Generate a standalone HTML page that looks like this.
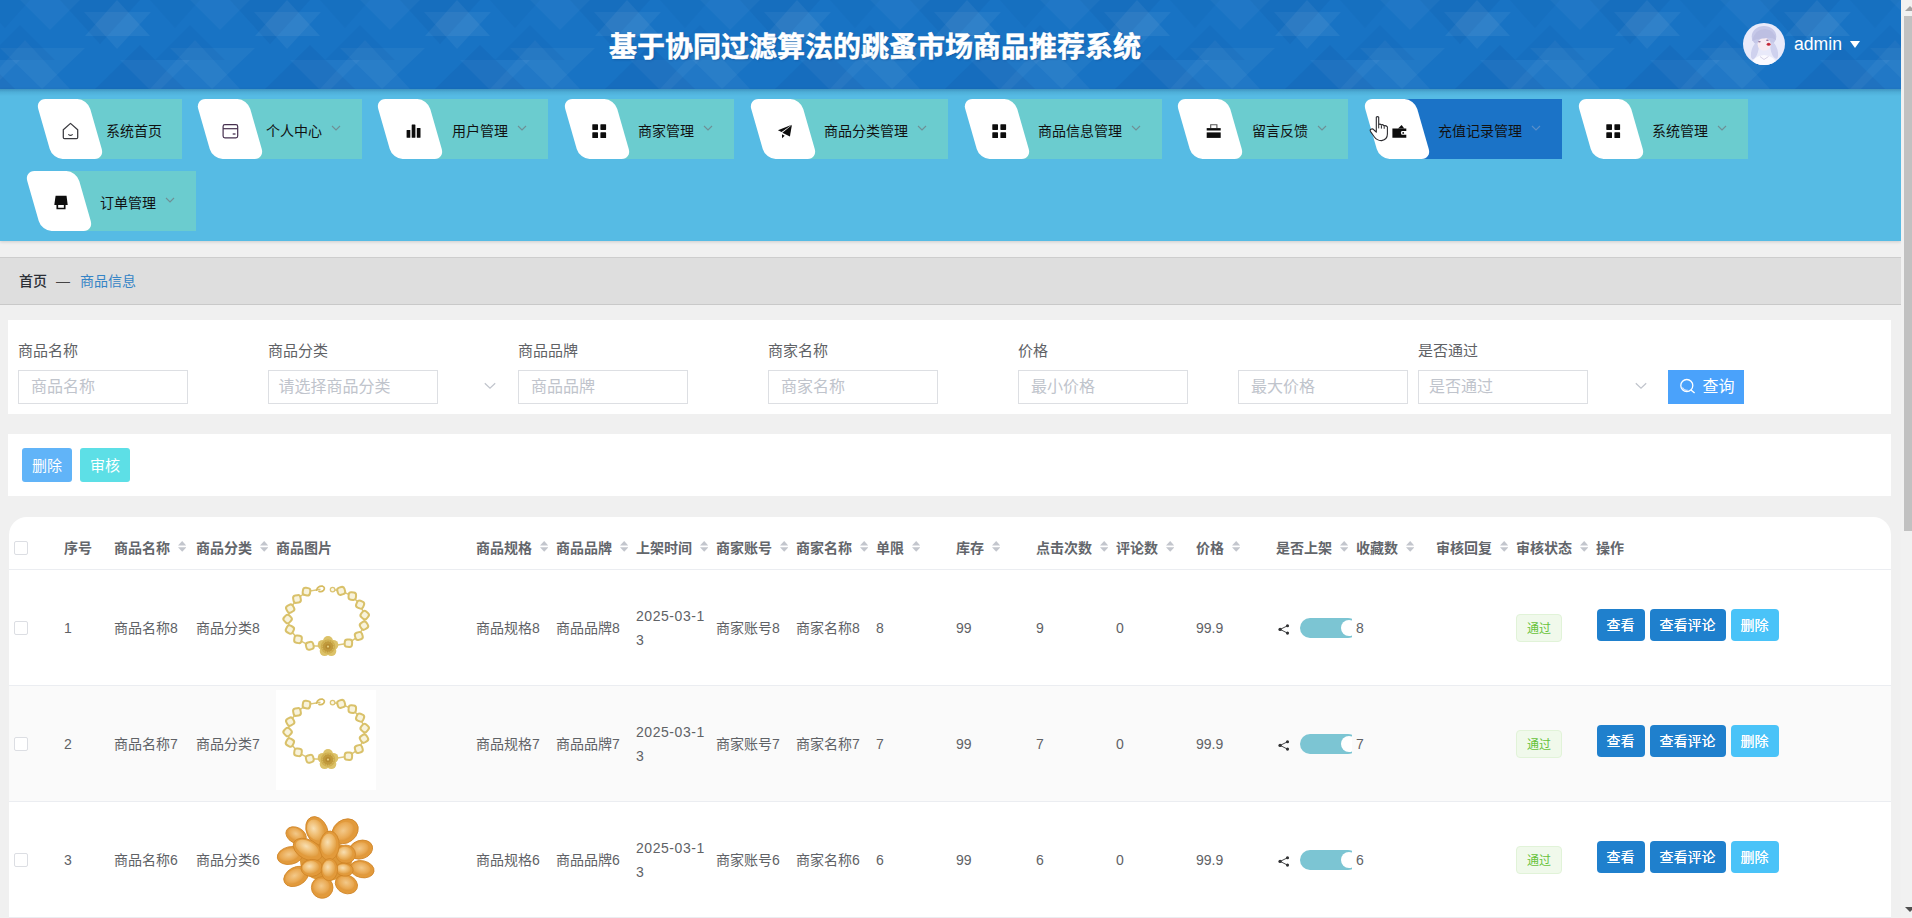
<!DOCTYPE html>
<html lang="zh-CN"><head><meta charset="utf-8"><title>商品信息</title><style>
*{box-sizing:border-box;margin:0;padding:0}
html,body{width:1912px;height:918px;overflow:hidden;background:#f0f0f0;font-family:"Liberation Sans","Noto Sans CJK SC",sans-serif;font-size:14px;color:#606266}
#app{position:relative;width:1912px;height:918px;overflow:hidden;background:#f0f0f0}
.abs{position:absolute}
#hdr{position:absolute;left:0;top:0;width:1901px;height:89px;background:#1873c4;overflow:hidden}
#hsh{position:absolute;left:0;top:89px;width:1901px;height:7px;background:linear-gradient(rgba(10,60,110,.30),rgba(10,60,110,.10) 45%,rgba(10,60,110,0));z-index:3}
#title{position:absolute;left:0;width:1750px;top:28px;height:40px;line-height:40px;text-align:center;color:#fff;font-size:28px;font-weight:bold;-webkit-text-stroke:.5px #fff;text-shadow:1px 1px 2px rgba(10,50,110,.35);white-space:nowrap}
#menu{position:absolute;left:0;top:89px;width:1901px;height:152px;background:#56bbe4;box-shadow:0 1px 3px rgba(0,0,0,.15)}
.mi{position:absolute;height:60px}
.mi .bg{position:absolute;left:30px;top:0;right:0;height:60px;background:#6bcccf}
.mi.act .bg{background:#1b73c7}
.mi .wb{position:absolute;left:6.5px;top:0;width:52px;height:60px;background:#fff;border-radius:10px;transform:skewX(16deg)}
.mi .tx{position:absolute;top:22px;height:20px;line-height:20px;font-size:14px;color:#111;white-space:nowrap}
.mi svg.ic{position:absolute;overflow:visible}
.mi svg.ar{position:absolute;top:26px;width:10px;height:6px}
#bc{position:absolute;left:0;top:257px;width:1901px;height:48px;background:#dedede;border-top:1px solid #cdcdcd;border-bottom:1px solid #c9c9c9}
#bc span{position:absolute;top:13px;line-height:20px;font-size:14px;white-space:nowrap}
.panel{position:absolute;left:8px;width:1883px;background:#fff}
.lbl{position:absolute;top:341px;line-height:20px;font-size:15px;color:#606266;white-space:nowrap}
.inp{position:absolute;top:370px;width:170px;height:34px;border:1px solid #dddfe3;background:#fff;font-size:16px;color:#c0c4cc;line-height:32px;padding-left:12px;white-space:nowrap}
.btn{position:absolute;color:#fff;text-align:center;white-space:nowrap}
table{border-collapse:collapse}
.th{position:absolute;top:538px;line-height:20px;font-size:14px;font-weight:bold;color:#63666b;white-space:nowrap}
.td{position:absolute;line-height:24px;font-size:14px;color:#606266;white-space:nowrap}
.row{position:absolute;left:9px;width:1882px;height:116px;border-bottom:1px solid #ebedf1}
.cb{position:absolute;left:14px;width:14px;height:14px;border:1px solid #dcdee3;border-radius:2px;background:#fff}
.tag{position:absolute;left:1516px;width:46px;height:28px;border:1px solid #e1f3d8;background:#f0f9eb;border-radius:4px;color:#67c23a;font-size:12px;line-height:29px;text-align:center}
.ob{position:absolute;height:32px;line-height:32px;border-radius:4px;color:#fff;font-size:14px;text-align:center;white-space:nowrap;text-shadow:0 0 .6px #fff}
</style></head><body><div id="app">
<div id="hdr"><svg class="abs" style="left:0;top:0" width="1901" height="89" viewBox="0 0 1901 89"><polygon points="-53,0 -85,36 -20,36" fill="rgba(255,255,255,.06)"/><polygon points="-86,12 -19,12 -53,49" fill="rgba(255,255,255,.05)"/><polygon points="-170,48 -85,48 -128,89" fill="rgba(255,255,255,.045)"/><polygon points="-190,89 -145,40 -100,89" fill="rgba(255,255,255,.04)"/><polygon points="-110,0 -30,0 -70,44" fill="rgba(0,40,110,.06)"/><polygon points="-75,89 -30,45 15,89" fill="rgba(0,40,110,.07)"/><polygon points="-150,0 -90,0 -120,30" fill="rgba(255,255,255,.035)"/><polygon points="-50,60 20,60 -15,95" fill="rgba(255,255,255,.04)"/><polygon points="-185,60 -150,25 -115,60" fill="rgba(0,40,110,.05)"/><polygon points="-20,0 30,0 5,28" fill="rgba(0,40,110,.045)"/><polygon points="117,0 85,36 150,36" fill="rgba(255,255,255,.06)"/><polygon points="84,12 151,12 117,49" fill="rgba(255,255,255,.05)"/><polygon points="0,48 85,48 42,89" fill="rgba(255,255,255,.045)"/><polygon points="-20,89 25,40 70,89" fill="rgba(255,255,255,.04)"/><polygon points="60,0 140,0 100,44" fill="rgba(0,40,110,.06)"/><polygon points="95,89 140,45 185,89" fill="rgba(0,40,110,.07)"/><polygon points="20,0 80,0 50,30" fill="rgba(255,255,255,.035)"/><polygon points="120,60 190,60 155,95" fill="rgba(255,255,255,.04)"/><polygon points="-15,60 20,25 55,60" fill="rgba(0,40,110,.05)"/><polygon points="150,0 200,0 175,28" fill="rgba(0,40,110,.045)"/><polygon points="287,0 255,36 320,36" fill="rgba(255,255,255,.06)"/><polygon points="254,12 321,12 287,49" fill="rgba(255,255,255,.05)"/><polygon points="170,48 255,48 212,89" fill="rgba(255,255,255,.045)"/><polygon points="150,89 195,40 240,89" fill="rgba(255,255,255,.04)"/><polygon points="230,0 310,0 270,44" fill="rgba(0,40,110,.06)"/><polygon points="265,89 310,45 355,89" fill="rgba(0,40,110,.07)"/><polygon points="190,0 250,0 220,30" fill="rgba(255,255,255,.035)"/><polygon points="290,60 360,60 325,95" fill="rgba(255,255,255,.04)"/><polygon points="155,60 190,25 225,60" fill="rgba(0,40,110,.05)"/><polygon points="320,0 370,0 345,28" fill="rgba(0,40,110,.045)"/><polygon points="457,0 425,36 490,36" fill="rgba(255,255,255,.06)"/><polygon points="424,12 491,12 457,49" fill="rgba(255,255,255,.05)"/><polygon points="340,48 425,48 382,89" fill="rgba(255,255,255,.045)"/><polygon points="320,89 365,40 410,89" fill="rgba(255,255,255,.04)"/><polygon points="400,0 480,0 440,44" fill="rgba(0,40,110,.06)"/><polygon points="435,89 480,45 525,89" fill="rgba(0,40,110,.07)"/><polygon points="360,0 420,0 390,30" fill="rgba(255,255,255,.035)"/><polygon points="460,60 530,60 495,95" fill="rgba(255,255,255,.04)"/><polygon points="325,60 360,25 395,60" fill="rgba(0,40,110,.05)"/><polygon points="490,0 540,0 515,28" fill="rgba(0,40,110,.045)"/><polygon points="627,0 595,36 660,36" fill="rgba(255,255,255,.06)"/><polygon points="594,12 661,12 627,49" fill="rgba(255,255,255,.05)"/><polygon points="510,48 595,48 552,89" fill="rgba(255,255,255,.045)"/><polygon points="490,89 535,40 580,89" fill="rgba(255,255,255,.04)"/><polygon points="570,0 650,0 610,44" fill="rgba(0,40,110,.06)"/><polygon points="605,89 650,45 695,89" fill="rgba(0,40,110,.07)"/><polygon points="530,0 590,0 560,30" fill="rgba(255,255,255,.035)"/><polygon points="630,60 700,60 665,95" fill="rgba(255,255,255,.04)"/><polygon points="495,60 530,25 565,60" fill="rgba(0,40,110,.05)"/><polygon points="660,0 710,0 685,28" fill="rgba(0,40,110,.045)"/><polygon points="797,0 765,36 830,36" fill="rgba(255,255,255,.06)"/><polygon points="764,12 831,12 797,49" fill="rgba(255,255,255,.05)"/><polygon points="680,48 765,48 722,89" fill="rgba(255,255,255,.045)"/><polygon points="660,89 705,40 750,89" fill="rgba(255,255,255,.04)"/><polygon points="740,0 820,0 780,44" fill="rgba(0,40,110,.06)"/><polygon points="775,89 820,45 865,89" fill="rgba(0,40,110,.07)"/><polygon points="700,0 760,0 730,30" fill="rgba(255,255,255,.035)"/><polygon points="800,60 870,60 835,95" fill="rgba(255,255,255,.04)"/><polygon points="665,60 700,25 735,60" fill="rgba(0,40,110,.05)"/><polygon points="830,0 880,0 855,28" fill="rgba(0,40,110,.045)"/><polygon points="967,0 935,36 1000,36" fill="rgba(255,255,255,.06)"/><polygon points="934,12 1001,12 967,49" fill="rgba(255,255,255,.05)"/><polygon points="850,48 935,48 892,89" fill="rgba(255,255,255,.045)"/><polygon points="830,89 875,40 920,89" fill="rgba(255,255,255,.04)"/><polygon points="910,0 990,0 950,44" fill="rgba(0,40,110,.06)"/><polygon points="945,89 990,45 1035,89" fill="rgba(0,40,110,.07)"/><polygon points="870,0 930,0 900,30" fill="rgba(255,255,255,.035)"/><polygon points="970,60 1040,60 1005,95" fill="rgba(255,255,255,.04)"/><polygon points="835,60 870,25 905,60" fill="rgba(0,40,110,.05)"/><polygon points="1000,0 1050,0 1025,28" fill="rgba(0,40,110,.045)"/><polygon points="1137,0 1105,36 1170,36" fill="rgba(255,255,255,.06)"/><polygon points="1104,12 1171,12 1137,49" fill="rgba(255,255,255,.05)"/><polygon points="1020,48 1105,48 1062,89" fill="rgba(255,255,255,.045)"/><polygon points="1000,89 1045,40 1090,89" fill="rgba(255,255,255,.04)"/><polygon points="1080,0 1160,0 1120,44" fill="rgba(0,40,110,.06)"/><polygon points="1115,89 1160,45 1205,89" fill="rgba(0,40,110,.07)"/><polygon points="1040,0 1100,0 1070,30" fill="rgba(255,255,255,.035)"/><polygon points="1140,60 1210,60 1175,95" fill="rgba(255,255,255,.04)"/><polygon points="1005,60 1040,25 1075,60" fill="rgba(0,40,110,.05)"/><polygon points="1170,0 1220,0 1195,28" fill="rgba(0,40,110,.045)"/><polygon points="1307,0 1275,36 1340,36" fill="rgba(255,255,255,.06)"/><polygon points="1274,12 1341,12 1307,49" fill="rgba(255,255,255,.05)"/><polygon points="1190,48 1275,48 1232,89" fill="rgba(255,255,255,.045)"/><polygon points="1170,89 1215,40 1260,89" fill="rgba(255,255,255,.04)"/><polygon points="1250,0 1330,0 1290,44" fill="rgba(0,40,110,.06)"/><polygon points="1285,89 1330,45 1375,89" fill="rgba(0,40,110,.07)"/><polygon points="1210,0 1270,0 1240,30" fill="rgba(255,255,255,.035)"/><polygon points="1310,60 1380,60 1345,95" fill="rgba(255,255,255,.04)"/><polygon points="1175,60 1210,25 1245,60" fill="rgba(0,40,110,.05)"/><polygon points="1340,0 1390,0 1365,28" fill="rgba(0,40,110,.045)"/><polygon points="1477,0 1445,36 1510,36" fill="rgba(255,255,255,.06)"/><polygon points="1444,12 1511,12 1477,49" fill="rgba(255,255,255,.05)"/><polygon points="1360,48 1445,48 1402,89" fill="rgba(255,255,255,.045)"/><polygon points="1340,89 1385,40 1430,89" fill="rgba(255,255,255,.04)"/><polygon points="1420,0 1500,0 1460,44" fill="rgba(0,40,110,.06)"/><polygon points="1455,89 1500,45 1545,89" fill="rgba(0,40,110,.07)"/><polygon points="1380,0 1440,0 1410,30" fill="rgba(255,255,255,.035)"/><polygon points="1480,60 1550,60 1515,95" fill="rgba(255,255,255,.04)"/><polygon points="1345,60 1380,25 1415,60" fill="rgba(0,40,110,.05)"/><polygon points="1510,0 1560,0 1535,28" fill="rgba(0,40,110,.045)"/><polygon points="1647,0 1615,36 1680,36" fill="rgba(255,255,255,.06)"/><polygon points="1614,12 1681,12 1647,49" fill="rgba(255,255,255,.05)"/><polygon points="1530,48 1615,48 1572,89" fill="rgba(255,255,255,.045)"/><polygon points="1510,89 1555,40 1600,89" fill="rgba(255,255,255,.04)"/><polygon points="1590,0 1670,0 1630,44" fill="rgba(0,40,110,.06)"/><polygon points="1625,89 1670,45 1715,89" fill="rgba(0,40,110,.07)"/><polygon points="1550,0 1610,0 1580,30" fill="rgba(255,255,255,.035)"/><polygon points="1650,60 1720,60 1685,95" fill="rgba(255,255,255,.04)"/><polygon points="1515,60 1550,25 1585,60" fill="rgba(0,40,110,.05)"/><polygon points="1680,0 1730,0 1705,28" fill="rgba(0,40,110,.045)"/><polygon points="1817,0 1785,36 1850,36" fill="rgba(255,255,255,.06)"/><polygon points="1784,12 1851,12 1817,49" fill="rgba(255,255,255,.05)"/><polygon points="1700,48 1785,48 1742,89" fill="rgba(255,255,255,.045)"/><polygon points="1680,89 1725,40 1770,89" fill="rgba(255,255,255,.04)"/><polygon points="1760,0 1840,0 1800,44" fill="rgba(0,40,110,.06)"/><polygon points="1795,89 1840,45 1885,89" fill="rgba(0,40,110,.07)"/><polygon points="1720,0 1780,0 1750,30" fill="rgba(255,255,255,.035)"/><polygon points="1820,60 1890,60 1855,95" fill="rgba(255,255,255,.04)"/><polygon points="1685,60 1720,25 1755,60" fill="rgba(0,40,110,.05)"/><polygon points="1850,0 1900,0 1875,28" fill="rgba(0,40,110,.045)"/><polygon points="1987,0 1955,36 2020,36" fill="rgba(255,255,255,.06)"/><polygon points="1954,12 2021,12 1987,49" fill="rgba(255,255,255,.05)"/><polygon points="1870,48 1955,48 1912,89" fill="rgba(255,255,255,.045)"/><polygon points="1850,89 1895,40 1940,89" fill="rgba(255,255,255,.04)"/><polygon points="1930,0 2010,0 1970,44" fill="rgba(0,40,110,.06)"/><polygon points="1965,89 2010,45 2055,89" fill="rgba(0,40,110,.07)"/><polygon points="1890,0 1950,0 1920,30" fill="rgba(255,255,255,.035)"/><polygon points="1990,60 2060,60 2025,95" fill="rgba(255,255,255,.04)"/><polygon points="1855,60 1890,25 1925,60" fill="rgba(0,40,110,.05)"/><polygon points="2020,0 2070,0 2045,28" fill="rgba(0,40,110,.045)"/></svg>
<div id="title">基于协同过滤算法的跳蚤市场商品推荐系统</div>
<svg class="abs" style="left:1742.5px;top:23px" width="42" height="42" viewBox="0 0 42 42">
<defs><clipPath id="avc"><circle cx="21" cy="21" r="21"/></clipPath><filter id="avb" x="-10%" y="-10%" width="120%" height="120%"><feGaussianBlur stdDeviation=".7"/></filter></defs>
<circle cx="21" cy="21" r="21" fill="#e9eafa"/>
<g clip-path="url(#avc)"><g filter="url(#avb)">
<ellipse cx="21" cy="13.5" rx="12.3" ry="10.6" fill="#c6c8e8"/>
<ellipse cx="11.8" cy="28" rx="3.3" ry="8.5" fill="#cfd1ee" transform="rotate(16 11.8 28)"/>
<ellipse cx="31.2" cy="27.5" rx="3.3" ry="8.5" fill="#cfd1ee" transform="rotate(-16 31.2 27.5)"/>
<ellipse cx="21.2" cy="21.2" rx="6.6" ry="6.4" fill="#f7ecf2"/>
<path d="M9 18Q12 6 22 6Q32 7 33 17Q28 13.5 21 15.5Q14 15 9 18Z" fill="#bdbfe2"/>
<path d="M8.5 42Q10 33 21 32Q32 33 34.5 42Z" fill="#fbfaff"/>
<path d="M17 33.5L21 36.5L25.5 33.5" fill="none" stroke="#d8d3e6" stroke-width="1"/>
</g>
<ellipse cx="25.6" cy="21.3" rx="2" ry="1.5" fill="#c8323f" filter="url(#avb)" opacity=".95"/>
<ellipse cx="25.6" cy="21.3" rx="1.2" ry=".9" fill="#c2202e"/>
<ellipse cx="16.4" cy="18.8" rx="1.4" ry=".8" fill="#7a5a8a" opacity=".8"/>
<ellipse cx="24.4" cy="17.2" rx="1.4" ry=".8" fill="#7a5a8a" opacity=".8"/>
</g></svg>
<div class="abs" style="left:1794px;top:32px;line-height:24px;font-size:17.6px;color:#fff;white-space:nowrap">admin</div>
<svg class="abs" style="left:1850px;top:41px" width="10" height="7" viewBox="0 0 10 7"><path d="M0 0H10L5 7Z" fill="#fff"/></svg>
</div>
<div id="hsh"></div>
<div id="menu">
<div class="mi" style="left:37.5px;top:10px;width:144.5px"><div class="bg"></div><div class="wb"></div><svg class="ic" style="left:0;top:0" width="144" height="60"><path d="M25.3 30.8L32.5 24.4L39.7 30.8V38.4Q39.7 39.6 38.5 39.6H26.5Q25.3 39.6 25.3 38.4Z" fill="none" stroke="#3a3a3f" stroke-width="1.25" stroke-linejoin="round"/><path d="M30.7 35.6Q32.5 37.2 34.3 35.6" fill="none" stroke="#3a3a3f" stroke-width="1.2" stroke-linecap="round"/></svg><div class="tx" style="left:68.5px">系统首页</div></div>
<div class="mi" style="left:197.5px;top:10px;width:164.5px"><div class="bg"></div><div class="wb"></div><svg class="ic" style="left:0;top:0" width="164" height="60"><rect x="25.1" y="25.6" width="14.6" height="13.2" rx="1.8" fill="none" stroke="#46304f" stroke-width="1.2"/><path d="M25.1 29.7H39.7" stroke="#46304f" stroke-width="1.2"/><path d="M34.7 35H37.5" stroke="#46304f" stroke-width="1.3"/></svg><div class="tx" style="left:68.5px">个人中心</div><svg class="ar" style="left:133.5px" viewBox="0 0 10 6"><path d="M1 1L5 5L9 1" fill="none" stroke="#6f8f95" stroke-width="1.1"/></svg></div>
<div class="mi" style="left:377.5px;top:10px;width:170.5px"><div class="bg"></div><div class="wb"></div><svg class="ic" style="left:0;top:0" width="170" height="60"><rect x="28.6" y="31" width="3.7" height="7.7" rx=".5" fill="#0d0d0d"/><rect x="33.7" y="25.4" width="3.7" height="13.3" rx=".5" fill="#0d0d0d"/><rect x="38.8" y="29.1" width="3.7" height="9.6" rx=".5" fill="#0d0d0d"/></svg><div class="tx" style="left:74.5px">用户管理</div><svg class="ar" style="left:139.5px" viewBox="0 0 10 6"><path d="M1 1L5 5L9 1" fill="none" stroke="#6f8f95" stroke-width="1.1"/></svg></div>
<div class="mi" style="left:564px;top:10px;width:170.3px"><div class="bg"></div><div class="wb"></div><svg class="ic" style="left:0;top:0" width="170" height="60"><rect x="28.3" y="25.2" width="5.7" height="5.7" rx=".6" fill="#0d0d0d"/><rect x="28.3" y="33.3" width="5.7" height="5.7" rx=".6" fill="#0d0d0d"/><rect x="36.4" y="25.2" width="5.7" height="5.7" rx=".6" fill="#0d0d0d"/><rect x="36.4" y="33.3" width="5.7" height="5.7" rx=".6" fill="#0d0d0d"/></svg><div class="tx" style="left:74.0px">商家管理</div><svg class="ar" style="left:139.0px" viewBox="0 0 10 6"><path d="M1 1L5 5L9 1" fill="none" stroke="#6f8f95" stroke-width="1.1"/></svg></div>
<div class="mi" style="left:750px;top:10px;width:198.3px"><div class="bg"></div><div class="wb"></div><svg class="ic" style="left:0;top:0" width="198" height="60"><path d="M27.9 31.3L41.8 25.7L31.6 33.1Z" fill="#0d0d0d"/><path d="M32.4 33.8L41.9 26.0L39.9 37.4Z" fill="#0d0d0d"/><path d="M32.0 35.3L34.7 36.8L32.0 39.3Z" fill="#0d0d0d"/></svg><div class="tx" style="left:74.0px">商品分类管理</div><svg class="ar" style="left:167.0px" viewBox="0 0 10 6"><path d="M1 1L5 5L9 1" fill="none" stroke="#6f8f95" stroke-width="1.1"/></svg></div>
<div class="mi" style="left:964px;top:10px;width:198.4px"><div class="bg"></div><div class="wb"></div><svg class="ic" style="left:0;top:0" width="198" height="60"><rect x="28.3" y="25.2" width="5.7" height="5.7" rx=".6" fill="#0d0d0d"/><rect x="28.3" y="33.3" width="5.7" height="5.7" rx=".6" fill="#0d0d0d"/><rect x="36.4" y="25.2" width="5.7" height="5.7" rx=".6" fill="#0d0d0d"/><rect x="36.4" y="33.3" width="5.7" height="5.7" rx=".6" fill="#0d0d0d"/></svg><div class="tx" style="left:74.0px">商品信息管理</div><svg class="ar" style="left:167.0px" viewBox="0 0 10 6"><path d="M1 1L5 5L9 1" fill="none" stroke="#6f8f95" stroke-width="1.1"/></svg></div>
<div class="mi" style="left:1177.5px;top:10px;width:170.5px"><div class="bg"></div><div class="wb"></div><svg class="ic" style="left:0;top:0" width="170" height="60"><rect x="28.700000000000045" y="29.1" width="14" height="2.4" fill="#0d0d0d"/><rect x="28.700000000000045" y="33.4" width="14" height="5.5" fill="#0d0d0d"/><path d="M32.700000000000045 29.1V25.7H38.90000000000005V29.1" fill="none" stroke="#555" stroke-width="1.1"/></svg><div class="tx" style="left:74.5px">留言反馈</div><svg class="ar" style="left:139.5px" viewBox="0 0 10 6"><path d="M1 1L5 5L9 1" fill="none" stroke="#6f8f95" stroke-width="1.1"/></svg></div>
<div class="mi act" style="left:1364px;top:10px;width:198.4px"><div class="bg"></div><div class="wb"></div><svg class="ic" style="left:0;top:0" width="198" height="60"><path d="M28.4 29.4H42.3V32.1H37.6Q36.0 33.9 37.6 35.7H42.3V38.7H28.4Z" fill="#0d0d0d"/><path d="M34.0 29.4L37.6 26.0L40.3 29.4Z" fill="#0d0d0d"/><circle cx="39.2" cy="33.9" r=".9" fill="#0d0d0d"/></svg><div class="tx" style="left:74.0px">充值记录管理</div><svg class="ar" style="left:167.0px" viewBox="0 0 10 6"><path d="M1 1L5 5L9 1" fill="none" stroke="#5a8fc9" stroke-width="1.1"/></svg></div>
<div class="mi" style="left:1578px;top:10px;width:170.3px"><div class="bg"></div><div class="wb"></div><svg class="ic" style="left:0;top:0" width="170" height="60"><rect x="28.3" y="25.2" width="5.7" height="5.7" rx=".6" fill="#0d0d0d"/><rect x="28.3" y="33.3" width="5.7" height="5.7" rx=".6" fill="#0d0d0d"/><rect x="36.4" y="25.2" width="5.7" height="5.7" rx=".6" fill="#0d0d0d"/><rect x="36.4" y="33.3" width="5.7" height="5.7" rx=".6" fill="#0d0d0d"/></svg><div class="tx" style="left:74.0px">系统管理</div><svg class="ar" style="left:139.0px" viewBox="0 0 10 6"><path d="M1 1L5 5L9 1" fill="none" stroke="#6f8f95" stroke-width="1.1"/></svg></div>
<div class="mi" style="left:26px;top:82px;width:170.0px"><div class="bg"></div><div class="wb"></div><svg class="ic" style="left:0;top:0" width="170" height="60"><path d="M29.6 24.8H40.5L41.7 34.1H28.3Z" fill="#0d0d0d"/><path d="M31.3 33.5V37.5H38.7V33.5" fill="none" stroke="#0d0d0d" stroke-width="1.7"/></svg><div class="tx" style="left:74.0px">订单管理</div><svg class="ar" style="left:139.0px" viewBox="0 0 10 6"><path d="M1 1L5 5L9 1" fill="none" stroke="#6f8f95" stroke-width="1.1"/></svg></div>
<svg class="abs" style="left:1368px;top:26px;overflow:visible" width="24" height="28" viewBox="0 0 24 28">
<path d="M8.3 2.2Q9.5 1 10.7 2.2V9.6Q12 8.6 13.3 9.9Q14.7 9.2 16 10.8Q17.6 10.2 19.4 11.8V19Q19.4 24.6 13.6 25.6Q9.2 25.8 6.4 22L2.6 16.6Q1.6 15 3 14.2Q4.6 13.4 6 15L8.3 17.2Z" fill="#fff" stroke="#2a2a2e" stroke-width="1.1" stroke-linejoin="round"/>
<path d="M10.7 9.6V13.4M13.4 10.4V13.6M16.2 11.2V13.8" stroke="#2a2a2e" stroke-width="1" fill="none"/>
</svg>
</div>
<div id="bc"><span style="left:19px;color:#2b2f36;font-weight:500">首页</span><span style="left:56px;color:#444">—</span><span style="left:80px;color:#3584c6">商品信息</span></div>
<div class="panel" style="top:320px;height:94px"></div>
<div class="lbl" style="left:18px">商品名称</div>
<div class="inp" style="left:18px;padding-left:12px">商品名称</div>
<div class="lbl" style="left:268px">商品分类</div>
<div class="inp" style="left:268px;padding-left:9.5px">请选择商品分类</div>
<div class="lbl" style="left:518px">商品品牌</div>
<div class="inp" style="left:518px;padding-left:12px">商品品牌</div>
<div class="lbl" style="left:768px">商家名称</div>
<div class="inp" style="left:768px;padding-left:12px">商家名称</div>
<div class="lbl" style="left:1018px">价格</div>
<div class="inp" style="left:1018px;padding-left:12px">最小价格</div>
<div class="inp" style="left:1238px;padding-left:12px">最大价格</div>
<div class="lbl" style="left:1418px">是否通过</div>
<div class="inp" style="left:1418px;padding-left:10px">是否通过</div>
<svg class="abs" style="left:484px;top:382px" width="12" height="8" viewBox="0 0 12 8"><path d="M.8 1.2L6 6.2L11.2 1.2" fill="none" stroke="#c0c4cc" stroke-width="1.2"/></svg>
<svg class="abs" style="left:1635px;top:382px" width="12" height="8" viewBox="0 0 12 8"><path d="M.8 1.2L6 6.2L11.2 1.2" fill="none" stroke="#c0c4cc" stroke-width="1.2"/></svg>
<div class="btn" style="left:1668px;top:370px;width:76px;height:34px;background:#4aa2fb;font-size:16px;line-height:34px"><svg class="abs" style="left:11px;top:8px;overflow:visible" width="18" height="18" viewBox="0 0 18 18"><circle cx="7.8" cy="7.5" r="6" fill="none" stroke="#fff" stroke-width="1.3"/><path d="M12 12L15.6 15" stroke="#fff" stroke-width="1.4"/><path d="M3.4 9.5A4.8 4.8 0 0 0 8.6 12.2" stroke="#cfe3ff" stroke-width="1.2" fill="none"/></svg><span class="abs" style="left:34.5px;top:0">查询</span></div>
<div class="panel" style="top:433.5px;height:62.5px"></div>
<div class="btn" style="left:22px;top:448px;width:50px;height:33.5px;line-height:36px;font-size:15px;background:#61b4f8;border-radius:3px">删除</div>
<div class="btn" style="left:80px;top:448px;width:50px;height:33.5px;line-height:36px;font-size:15px;background:#5ddfe6;border-radius:3px">审核</div>
<div class="panel" style="left:9px;width:1882px;top:516.5px;height:420px;border-radius:18px 18px 0 0"></div>
<div class="abs" style="left:9px;top:569px;width:1882px;height:1px;background:#ebedf1"></div>
<div class="cb" style="top:541px"></div>
<div class="th" style="left:64px">序号</div>
<div class="th" style="left:114px">商品名称</div>
<svg class="abs" style="left:177.8px;top:541.3px" width="8.4" height="11" viewBox="0 0 8.4 11"><path d="M0 4.6H8.4L4.2 0Z" fill="#c3c6cd"/><path d="M0 6.2H8.4L4.2 10.8Z" fill="#c3c6cd"/></svg>
<div class="th" style="left:196px">商品分类</div>
<svg class="abs" style="left:259.8px;top:541.3px" width="8.4" height="11" viewBox="0 0 8.4 11"><path d="M0 4.6H8.4L4.2 0Z" fill="#c3c6cd"/><path d="M0 6.2H8.4L4.2 10.8Z" fill="#c3c6cd"/></svg>
<div class="th" style="left:276px">商品图片</div>
<div class="th" style="left:476px">商品规格</div>
<svg class="abs" style="left:539.8px;top:541.3px" width="8.4" height="11" viewBox="0 0 8.4 11"><path d="M0 4.6H8.4L4.2 0Z" fill="#c3c6cd"/><path d="M0 6.2H8.4L4.2 10.8Z" fill="#c3c6cd"/></svg>
<div class="th" style="left:556px">商品品牌</div>
<svg class="abs" style="left:619.8px;top:541.3px" width="8.4" height="11" viewBox="0 0 8.4 11"><path d="M0 4.6H8.4L4.2 0Z" fill="#c3c6cd"/><path d="M0 6.2H8.4L4.2 10.8Z" fill="#c3c6cd"/></svg>
<div class="th" style="left:636px">上架时间</div>
<svg class="abs" style="left:699.8px;top:541.3px" width="8.4" height="11" viewBox="0 0 8.4 11"><path d="M0 4.6H8.4L4.2 0Z" fill="#c3c6cd"/><path d="M0 6.2H8.4L4.2 10.8Z" fill="#c3c6cd"/></svg>
<div class="th" style="left:716px">商家账号</div>
<svg class="abs" style="left:779.8px;top:541.3px" width="8.4" height="11" viewBox="0 0 8.4 11"><path d="M0 4.6H8.4L4.2 0Z" fill="#c3c6cd"/><path d="M0 6.2H8.4L4.2 10.8Z" fill="#c3c6cd"/></svg>
<div class="th" style="left:796px">商家名称</div>
<svg class="abs" style="left:859.8px;top:541.3px" width="8.4" height="11" viewBox="0 0 8.4 11"><path d="M0 4.6H8.4L4.2 0Z" fill="#c3c6cd"/><path d="M0 6.2H8.4L4.2 10.8Z" fill="#c3c6cd"/></svg>
<div class="th" style="left:876px">单限</div>
<svg class="abs" style="left:911.8px;top:541.3px" width="8.4" height="11" viewBox="0 0 8.4 11"><path d="M0 4.6H8.4L4.2 0Z" fill="#c3c6cd"/><path d="M0 6.2H8.4L4.2 10.8Z" fill="#c3c6cd"/></svg>
<div class="th" style="left:956px">库存</div>
<svg class="abs" style="left:991.8px;top:541.3px" width="8.4" height="11" viewBox="0 0 8.4 11"><path d="M0 4.6H8.4L4.2 0Z" fill="#c3c6cd"/><path d="M0 6.2H8.4L4.2 10.8Z" fill="#c3c6cd"/></svg>
<div class="th" style="left:1036px">点击次数</div>
<svg class="abs" style="left:1099.8px;top:541.3px" width="8.4" height="11" viewBox="0 0 8.4 11"><path d="M0 4.6H8.4L4.2 0Z" fill="#c3c6cd"/><path d="M0 6.2H8.4L4.2 10.8Z" fill="#c3c6cd"/></svg>
<div class="th" style="left:1116px">评论数</div>
<svg class="abs" style="left:1165.8px;top:541.3px" width="8.4" height="11" viewBox="0 0 8.4 11"><path d="M0 4.6H8.4L4.2 0Z" fill="#c3c6cd"/><path d="M0 6.2H8.4L4.2 10.8Z" fill="#c3c6cd"/></svg>
<div class="th" style="left:1196px">价格</div>
<svg class="abs" style="left:1231.8px;top:541.3px" width="8.4" height="11" viewBox="0 0 8.4 11"><path d="M0 4.6H8.4L4.2 0Z" fill="#c3c6cd"/><path d="M0 6.2H8.4L4.2 10.8Z" fill="#c3c6cd"/></svg>
<div class="th" style="left:1276px">是否上架</div>
<svg class="abs" style="left:1339.8px;top:541.3px" width="8.4" height="11" viewBox="0 0 8.4 11"><path d="M0 4.6H8.4L4.2 0Z" fill="#c3c6cd"/><path d="M0 6.2H8.4L4.2 10.8Z" fill="#c3c6cd"/></svg>
<div class="th" style="left:1356px">收藏数</div>
<svg class="abs" style="left:1405.8px;top:541.3px" width="8.4" height="11" viewBox="0 0 8.4 11"><path d="M0 4.6H8.4L4.2 0Z" fill="#c3c6cd"/><path d="M0 6.2H8.4L4.2 10.8Z" fill="#c3c6cd"/></svg>
<div class="th" style="left:1436px">审核回复</div>
<svg class="abs" style="left:1499.8px;top:541.3px" width="8.4" height="11" viewBox="0 0 8.4 11"><path d="M0 4.6H8.4L4.2 0Z" fill="#c3c6cd"/><path d="M0 6.2H8.4L4.2 10.8Z" fill="#c3c6cd"/></svg>
<div class="th" style="left:1516px">审核状态</div>
<svg class="abs" style="left:1579.8px;top:541.3px" width="8.4" height="11" viewBox="0 0 8.4 11"><path d="M0 4.6H8.4L4.2 0Z" fill="#c3c6cd"/><path d="M0 6.2H8.4L4.2 10.8Z" fill="#c3c6cd"/></svg>
<div class="th" style="left:1596px">操作</div>
<div class="row" style="top:570px;background:#fff"></div>
<div class="cb" style="top:620.5px"></div>
<div class="td" style="left:64px;top:616px">1</div>
<div class="td" style="left:114px;top:616px">商品名称8</div>
<div class="td" style="left:196px;top:616px">商品分类8</div>
<div class="abs" style="left:276px;top:577px;width:100px;height:100px;background:#fff"><svg class="abs" style="left:0;top:0" width="100" height="100" viewBox="0 0 100 100"><rect width="100" height="100" fill="#fff"/><polyline points="44.5,12.2 30.5,14.6 21.0,22.0 14.2,31.6 11.6,42.0 13.9,52.5 22.0,62.3 33.8,68.8 52.0,69.6 72.4,66.2 82.8,59.0 88.0,48.6 88.7,38.1 84.1,27.6 76.3,19.1 65.2,13.9 56.6,12.6" fill="none" stroke="#dcc677" stroke-width="1.5"/><rect x="26.8" y="10.9" width="7.4" height="7.4" rx="2.6" transform="rotate(-81 30.5 14.6)" fill="#f8f3dc" stroke="#d9c16a" stroke-width="2"/><rect x="17.3" y="18.3" width="7.4" height="7.4" rx="2.6" transform="rotate(-101 21.0 22.0)" fill="#f8f3dc" stroke="#d9c16a" stroke-width="2"/><rect x="10.5" y="27.9" width="7.4" height="7.4" rx="2.6" transform="rotate(-120 14.2 31.6)" fill="#f8f3dc" stroke="#d9c16a" stroke-width="2"/><rect x="7.9" y="38.3" width="7.4" height="7.4" rx="2.6" transform="rotate(224 11.6 42.0)" fill="#f8f3dc" stroke="#d9c16a" stroke-width="2"/><rect x="10.2" y="48.8" width="7.4" height="7.4" rx="2.6" transform="rotate(208 13.9 52.5)" fill="#f8f3dc" stroke="#d9c16a" stroke-width="2"/><rect x="18.3" y="58.6" width="7.4" height="7.4" rx="2.6" transform="rotate(188 22.0 62.3)" fill="#f8f3dc" stroke="#d9c16a" stroke-width="2"/><rect x="30.1" y="65.1" width="7.4" height="7.4" rx="2.6" transform="rotate(166 33.8 68.8)" fill="#f8f3dc" stroke="#d9c16a" stroke-width="2"/><rect x="68.7" y="62.5" width="7.4" height="7.4" rx="2.6" transform="rotate(93 72.4 66.2)" fill="#f8f3dc" stroke="#d9c16a" stroke-width="2"/><rect x="79.1" y="55.3" width="7.4" height="7.4" rx="2.6" transform="rotate(73 82.8 59.0)" fill="#f8f3dc" stroke="#d9c16a" stroke-width="2"/><rect x="84.3" y="44.9" width="7.4" height="7.4" rx="2.6" transform="rotate(56 88.0 48.6)" fill="#f8f3dc" stroke="#d9c16a" stroke-width="2"/><rect x="85.0" y="34.4" width="7.4" height="7.4" rx="2.6" transform="rotate(40 88.7 38.1)" fill="#f8f3dc" stroke="#d9c16a" stroke-width="2"/><rect x="80.4" y="23.9" width="7.4" height="7.4" rx="2.6" transform="rotate(23 84.1 27.6)" fill="#f8f3dc" stroke="#d9c16a" stroke-width="2"/><rect x="72.6" y="15.4" width="7.4" height="7.4" rx="2.6" transform="rotate(5 76.3 19.1)" fill="#f8f3dc" stroke="#d9c16a" stroke-width="2"/><rect x="61.5" y="10.2" width="7.4" height="7.4" rx="2.6" transform="rotate(-16 65.2 13.9)" fill="#f8f3dc" stroke="#d9c16a" stroke-width="2"/><path d="M40.5 13.2Q42 8.6 46.6 9.2Q49.6 10.4 47.6 13.4Q45.4 15.4 43 14.4" fill="none" stroke="#d6bb60" stroke-width="1.7" stroke-linecap="round"/><circle cx="56.6" cy="12.6" r="2.3" fill="#fbf7e6" stroke="#dcc574" stroke-width="1.3"/><circle cx="52.0" cy="64.0" r="5" fill="#dcc269"/><circle cx="57.3" cy="67.9" r="5" fill="#dcc269"/><circle cx="55.3" cy="74.1" r="5" fill="#dcc269"/><circle cx="48.7" cy="74.1" r="5" fill="#dcc269"/><circle cx="46.7" cy="67.9" r="5" fill="#dcc269"/><circle cx="52" cy="69.6" r="7.2" fill="#cfae4e"/><circle cx="52" cy="69.6" r="5.6" fill="#c09a3c" stroke="#dcc470" stroke-width=".8" stroke-dasharray="1.2 1.2"/><circle cx="52" cy="69.6" r="2.6" fill="#b58a30"/><circle cx="52" cy="69.6" r="1.1" fill="#e6cf7e"/></svg></div>
<div class="td" style="left:476px;top:616px">商品规格8</div>
<div class="td" style="left:556px;top:616px">商品品牌8</div>
<div class="td" style="left:636px;top:604px;letter-spacing:.55px">2025-03-1</div>
<div class="td" style="left:636px;top:628px">3</div>
<div class="td" style="left:716px;top:616px">商家账号8</div>
<div class="td" style="left:796px;top:616px">商家名称8</div>
<div class="td" style="left:876px;top:616px">8</div>
<div class="td" style="left:956px;top:616px">99</div>
<div class="td" style="left:1036px;top:616px">9</div>
<div class="td" style="left:1116px;top:616px">0</div>
<div class="td" style="left:1196px;top:616px">99.9</div>
<svg class="abs" style="left:1277.5px;top:623.8px;overflow:visible" width="12" height="11" viewBox="0 0 12 11"><path d="M2.2 5.4L9.4 1.8M2.2 5.4L9.4 9.1" stroke="#303133" stroke-width=".9" fill="none"/><circle cx="2.1" cy="5.4" r="1.7" fill="#303133"/><circle cx="9.5" cy="1.8" r="1.55" fill="#303133"/><circle cx="9.5" cy="9.1" r="1.55" fill="#303133"/></svg>
<div class="abs" style="left:1300px;top:618px;width:52px;height:20px;overflow:hidden"><div class="abs" style="left:0;top:0;width:57.5px;height:20px;border-radius:10px;background:#7cc5d3"></div><div class="abs" style="left:40.5px;top:2px;width:16px;height:16px;border-radius:8px;background:#fff"></div></div>
<div class="td" style="left:1356px;top:616px">8</div>
<div class="tag" style="top:614px">通过</div>
<div class="ob" style="left:1596.5px;top:609px;width:48px;background:#1f80cd">查看</div>
<div class="ob" style="left:1649.5px;top:609px;width:76px;background:#1f80cd">查看评论</div>
<div class="ob" style="left:1730.5px;top:609px;width:48px;background:#4ac3f8">删除</div>
<div class="row" style="top:686px;background:#fafafa"></div>
<div class="cb" style="top:736.5px"></div>
<div class="td" style="left:64px;top:732px">2</div>
<div class="td" style="left:114px;top:732px">商品名称7</div>
<div class="td" style="left:196px;top:732px">商品分类7</div>
<div class="abs" style="left:276px;top:690px;width:100px;height:100px;background:#fff"><svg class="abs" style="left:0;top:0" width="100" height="100" viewBox="0 0 100 100"><rect width="100" height="100" fill="#fff"/><polyline points="44.5,12.2 30.5,14.6 21.0,22.0 14.2,31.6 11.6,42.0 13.9,52.5 22.0,62.3 33.8,68.8 52.0,69.6 72.4,66.2 82.8,59.0 88.0,48.6 88.7,38.1 84.1,27.6 76.3,19.1 65.2,13.9 56.6,12.6" fill="none" stroke="#dcc677" stroke-width="1.5"/><rect x="26.8" y="10.9" width="7.4" height="7.4" rx="2.6" transform="rotate(-81 30.5 14.6)" fill="#f8f3dc" stroke="#d9c16a" stroke-width="2"/><rect x="17.3" y="18.3" width="7.4" height="7.4" rx="2.6" transform="rotate(-101 21.0 22.0)" fill="#f8f3dc" stroke="#d9c16a" stroke-width="2"/><rect x="10.5" y="27.9" width="7.4" height="7.4" rx="2.6" transform="rotate(-120 14.2 31.6)" fill="#f8f3dc" stroke="#d9c16a" stroke-width="2"/><rect x="7.9" y="38.3" width="7.4" height="7.4" rx="2.6" transform="rotate(224 11.6 42.0)" fill="#f8f3dc" stroke="#d9c16a" stroke-width="2"/><rect x="10.2" y="48.8" width="7.4" height="7.4" rx="2.6" transform="rotate(208 13.9 52.5)" fill="#f8f3dc" stroke="#d9c16a" stroke-width="2"/><rect x="18.3" y="58.6" width="7.4" height="7.4" rx="2.6" transform="rotate(188 22.0 62.3)" fill="#f8f3dc" stroke="#d9c16a" stroke-width="2"/><rect x="30.1" y="65.1" width="7.4" height="7.4" rx="2.6" transform="rotate(166 33.8 68.8)" fill="#f8f3dc" stroke="#d9c16a" stroke-width="2"/><rect x="68.7" y="62.5" width="7.4" height="7.4" rx="2.6" transform="rotate(93 72.4 66.2)" fill="#f8f3dc" stroke="#d9c16a" stroke-width="2"/><rect x="79.1" y="55.3" width="7.4" height="7.4" rx="2.6" transform="rotate(73 82.8 59.0)" fill="#f8f3dc" stroke="#d9c16a" stroke-width="2"/><rect x="84.3" y="44.9" width="7.4" height="7.4" rx="2.6" transform="rotate(56 88.0 48.6)" fill="#f8f3dc" stroke="#d9c16a" stroke-width="2"/><rect x="85.0" y="34.4" width="7.4" height="7.4" rx="2.6" transform="rotate(40 88.7 38.1)" fill="#f8f3dc" stroke="#d9c16a" stroke-width="2"/><rect x="80.4" y="23.9" width="7.4" height="7.4" rx="2.6" transform="rotate(23 84.1 27.6)" fill="#f8f3dc" stroke="#d9c16a" stroke-width="2"/><rect x="72.6" y="15.4" width="7.4" height="7.4" rx="2.6" transform="rotate(5 76.3 19.1)" fill="#f8f3dc" stroke="#d9c16a" stroke-width="2"/><rect x="61.5" y="10.2" width="7.4" height="7.4" rx="2.6" transform="rotate(-16 65.2 13.9)" fill="#f8f3dc" stroke="#d9c16a" stroke-width="2"/><path d="M40.5 13.2Q42 8.6 46.6 9.2Q49.6 10.4 47.6 13.4Q45.4 15.4 43 14.4" fill="none" stroke="#d6bb60" stroke-width="1.7" stroke-linecap="round"/><circle cx="56.6" cy="12.6" r="2.3" fill="#fbf7e6" stroke="#dcc574" stroke-width="1.3"/><circle cx="52.0" cy="64.0" r="5" fill="#dcc269"/><circle cx="57.3" cy="67.9" r="5" fill="#dcc269"/><circle cx="55.3" cy="74.1" r="5" fill="#dcc269"/><circle cx="48.7" cy="74.1" r="5" fill="#dcc269"/><circle cx="46.7" cy="67.9" r="5" fill="#dcc269"/><circle cx="52" cy="69.6" r="7.2" fill="#cfae4e"/><circle cx="52" cy="69.6" r="5.6" fill="#c09a3c" stroke="#dcc470" stroke-width=".8" stroke-dasharray="1.2 1.2"/><circle cx="52" cy="69.6" r="2.6" fill="#b58a30"/><circle cx="52" cy="69.6" r="1.1" fill="#e6cf7e"/></svg></div>
<div class="td" style="left:476px;top:732px">商品规格7</div>
<div class="td" style="left:556px;top:732px">商品品牌7</div>
<div class="td" style="left:636px;top:720px;letter-spacing:.55px">2025-03-1</div>
<div class="td" style="left:636px;top:744px">3</div>
<div class="td" style="left:716px;top:732px">商家账号7</div>
<div class="td" style="left:796px;top:732px">商家名称7</div>
<div class="td" style="left:876px;top:732px">7</div>
<div class="td" style="left:956px;top:732px">99</div>
<div class="td" style="left:1036px;top:732px">7</div>
<div class="td" style="left:1116px;top:732px">0</div>
<div class="td" style="left:1196px;top:732px">99.9</div>
<svg class="abs" style="left:1277.5px;top:739.8px;overflow:visible" width="12" height="11" viewBox="0 0 12 11"><path d="M2.2 5.4L9.4 1.8M2.2 5.4L9.4 9.1" stroke="#303133" stroke-width=".9" fill="none"/><circle cx="2.1" cy="5.4" r="1.7" fill="#303133"/><circle cx="9.5" cy="1.8" r="1.55" fill="#303133"/><circle cx="9.5" cy="9.1" r="1.55" fill="#303133"/></svg>
<div class="abs" style="left:1300px;top:734px;width:52px;height:20px;overflow:hidden"><div class="abs" style="left:0;top:0;width:57.5px;height:20px;border-radius:10px;background:#7cc5d3"></div><div class="abs" style="left:40.5px;top:2px;width:16px;height:16px;border-radius:8px;background:#fff"></div></div>
<div class="td" style="left:1356px;top:732px">7</div>
<div class="tag" style="top:730px">通过</div>
<div class="ob" style="left:1596.5px;top:725px;width:48px;background:#1f80cd">查看</div>
<div class="ob" style="left:1649.5px;top:725px;width:76px;background:#1f80cd">查看评论</div>
<div class="ob" style="left:1730.5px;top:725px;width:48px;background:#4ac3f8">删除</div>
<div class="row" style="top:802px;background:#fff"></div>
<div class="cb" style="top:852.5px"></div>
<div class="td" style="left:64px;top:848px">3</div>
<div class="td" style="left:114px;top:848px">商品名称6</div>
<div class="td" style="left:196px;top:848px">商品分类6</div>
<div class="abs" style="left:276px;top:806px;width:100px;height:100px;background:#fff"><svg class="abs" style="left:0;top:0" width="100" height="100" viewBox="0 0 100 100"><defs><radialGradient id="ab" cx=".42" cy=".4" r=".7"><stop offset="0" stop-color="#f8dfb2"/><stop offset=".5" stop-color="#efbb6e"/><stop offset="1" stop-color="#dc9433"/></radialGradient><radialGradient id="ab2" cx=".5" cy=".45" r=".7"><stop offset="0" stop-color="#f3c98a"/><stop offset=".6" stop-color="#e9a851"/><stop offset="1" stop-color="#d3862a"/></radialGradient></defs><rect width="100" height="100" fill="#fff"/><ellipse cx="50" cy="55" rx="26" ry="20" fill="#dc9636"/><g transform="rotate(-12 14.2 49.5)"><ellipse cx="14.2" cy="49.5" rx="13.1" ry="8.8" fill="#e29a3b" stroke="#cf8427" stroke-width=".8"/><ellipse cx="13.1" cy="48.8" rx="10.2" ry="6.5" fill="url(#ab2)"/></g><g transform="rotate(-28 20.1 70.4)"><ellipse cx="20.1" cy="70.4" rx="13.1" ry="9.2" fill="#e29a3b" stroke="#cf8427" stroke-width=".8"/><ellipse cx="19.0" cy="69.7" rx="10.2" ry="6.8" fill="url(#ab2)"/></g><g transform="rotate(0 46.2 81.5)"><ellipse cx="46.2" cy="81.5" rx="10.8" ry="10.8" fill="#e29a3b" stroke="#cf8427" stroke-width=".8"/><ellipse cx="45.3" cy="80.7" rx="8.4" ry="8.0" fill="url(#ab2)"/></g><g transform="rotate(22 70.4 78.3)"><ellipse cx="70.4" cy="78.3" rx="11.4" ry="9.2" fill="#e29a3b" stroke="#cf8427" stroke-width=".8"/><ellipse cx="69.5" cy="77.5" rx="8.9" ry="6.8" fill="url(#ab2)"/></g><g transform="rotate(12 86.1 63.2)"><ellipse cx="86.1" cy="63.2" rx="12.1" ry="8.5" fill="#e29a3b" stroke="#cf8427" stroke-width=".8"/><ellipse cx="85.1" cy="62.6" rx="9.4" ry="6.3" fill="url(#ab2)"/></g><g transform="rotate(-18 84.8 43.6)"><ellipse cx="84.8" cy="43.6" rx="12.1" ry="9.2" fill="#e29a3b" stroke="#cf8427" stroke-width=".8"/><ellipse cx="83.8" cy="42.9" rx="9.4" ry="6.8" fill="url(#ab2)"/></g><g transform="rotate(-38 69.1 25.3)"><ellipse cx="69.1" cy="25.3" rx="14.1" ry="11.4" fill="#e29a3b" stroke="#cf8427" stroke-width=".8"/><ellipse cx="68.0" cy="24.4" rx="11.0" ry="8.5" fill="url(#ab2)"/></g><g transform="rotate(28 20.1 29.3)"><ellipse cx="20.1" cy="29.3" rx="10.8" ry="7.8" fill="#e29a3b" stroke="#cf8427" stroke-width=".8"/><ellipse cx="19.2" cy="28.6" rx="8.4" ry="5.8" fill="url(#ab2)"/></g><g transform="rotate(-24 41.0 24.7)"><ellipse cx="41.0" cy="24.7" rx="10.5" ry="14.7" fill="#e29a3b" stroke="#cf8427" stroke-width=".8"/><ellipse cx="40.1" cy="23.5" rx="8.2" ry="10.9" fill="url(#ab)"/></g><g transform="rotate(28 31.8 43.6)"><ellipse cx="31.8" cy="43.6" rx="15.7" ry="9.8" fill="#e29a3b" stroke="#cf8427" stroke-width=".8"/><ellipse cx="30.6" cy="42.8" rx="12.2" ry="7.3" fill="url(#ab)"/></g><g transform="rotate(0 69.7 48.2)"><ellipse cx="69.7" cy="48.2" rx="9.8" ry="9.2" fill="#e29a3b" stroke="#cf8427" stroke-width=".8"/><ellipse cx="69.0" cy="47.5" rx="7.6" ry="6.8" fill="url(#ab)"/></g><g transform="rotate(-5 35.8 61.9)"><ellipse cx="35.8" cy="61.9" rx="10.8" ry="8.5" fill="#e29a3b" stroke="#cf8427" stroke-width=".8"/><ellipse cx="34.9" cy="61.3" rx="8.4" ry="6.3" fill="url(#ab)"/></g><g transform="rotate(8 68.4 63.6)"><ellipse cx="68.4" cy="63.6" rx="8.8" ry="6.5" fill="#e29a3b" stroke="#cf8427" stroke-width=".8"/><ellipse cx="67.7" cy="63.1" rx="6.9" ry="4.8" fill="url(#ab)"/></g><g transform="rotate(4 53.4 39.7)"><ellipse cx="53.4" cy="39.7" rx="9.8" ry="14.7" fill="#e29a3b" stroke="#cf8427" stroke-width=".8"/><ellipse cx="52.6" cy="38.5" rx="7.6" ry="10.9" fill="url(#ab)"/></g><g transform="rotate(3 53.4 63.6)"><ellipse cx="53.4" cy="63.6" rx="8.2" ry="11.1" fill="#e29a3b" stroke="#cf8427" stroke-width=".8"/><ellipse cx="52.7" cy="62.7" rx="6.4" ry="8.2" fill="url(#ab)"/></g></svg></div>
<div class="td" style="left:476px;top:848px">商品规格6</div>
<div class="td" style="left:556px;top:848px">商品品牌6</div>
<div class="td" style="left:636px;top:836px;letter-spacing:.55px">2025-03-1</div>
<div class="td" style="left:636px;top:860px">3</div>
<div class="td" style="left:716px;top:848px">商家账号6</div>
<div class="td" style="left:796px;top:848px">商家名称6</div>
<div class="td" style="left:876px;top:848px">6</div>
<div class="td" style="left:956px;top:848px">99</div>
<div class="td" style="left:1036px;top:848px">6</div>
<div class="td" style="left:1116px;top:848px">0</div>
<div class="td" style="left:1196px;top:848px">99.9</div>
<svg class="abs" style="left:1277.5px;top:855.8px;overflow:visible" width="12" height="11" viewBox="0 0 12 11"><path d="M2.2 5.4L9.4 1.8M2.2 5.4L9.4 9.1" stroke="#303133" stroke-width=".9" fill="none"/><circle cx="2.1" cy="5.4" r="1.7" fill="#303133"/><circle cx="9.5" cy="1.8" r="1.55" fill="#303133"/><circle cx="9.5" cy="9.1" r="1.55" fill="#303133"/></svg>
<div class="abs" style="left:1300px;top:850px;width:52px;height:20px;overflow:hidden"><div class="abs" style="left:0;top:0;width:57.5px;height:20px;border-radius:10px;background:#7cc5d3"></div><div class="abs" style="left:40.5px;top:2px;width:16px;height:16px;border-radius:8px;background:#fff"></div></div>
<div class="td" style="left:1356px;top:848px">6</div>
<div class="tag" style="top:846px">通过</div>
<div class="ob" style="left:1596.5px;top:841px;width:48px;background:#1f80cd">查看</div>
<div class="ob" style="left:1649.5px;top:841px;width:76px;background:#1f80cd">查看评论</div>
<div class="ob" style="left:1730.5px;top:841px;width:48px;background:#4ac3f8">删除</div>
<div class="abs" style="left:1901px;top:0;width:11px;height:918px;background:#f1f1f1"></div>
<div class="abs" style="left:1904px;top:16px;width:8px;height:515px;background:#c1c1c1"></div>
<svg class="abs" style="left:1905px;top:6px" width="7" height="5" viewBox="0 0 7 5"><path d="M0 5L5 0L10 5Z" fill="#a3a3a3"/></svg>
<svg class="abs" style="left:1905px;top:907px" width="7" height="5" viewBox="0 0 7 5"><path d="M0 0L5 5L10 0Z" fill="#505050"/></svg>
</div></body></html>
